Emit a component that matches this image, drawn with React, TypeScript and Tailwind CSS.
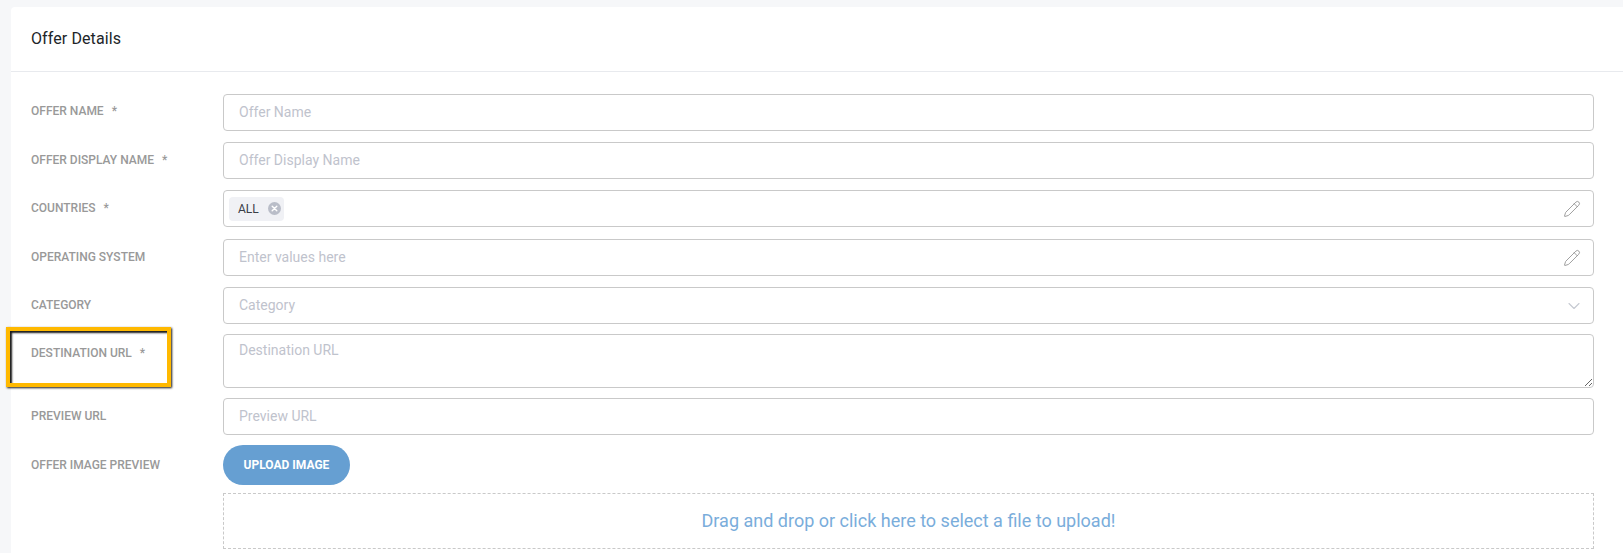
import React from 'react';
import { ChevronDown, Pencil } from 'lucide-react';

const labelClass = 'w-[192px] shrink-0 text-[12px] font-medium uppercase text-[#999999] leading-[14px]';
const boxClass = 'w-full h-[37px] rounded-[4px] border border-[#c9c9c9] bg-white pl-[15px] pr-[15px] pb-[2px] text-[14px] outline-none placeholder:text-[#bfc3cd]';

const Label: React.FC<{ text: string; required?: boolean; className?: string }> = ({ text, required, className }) => (
  <div className={`${labelClass} ${className ?? 'pt-[10px]'}`}>
    {text}
    {required && <span className="ml-[8px]">*</span>}
  </div>
);

const ClearIcon = () => (
  <svg width="13" height="13" viewBox="0 0 13 13">
    <circle cx="6.5" cy="6.5" r="6.5" fill="#b9bdc8" />
    <path d="M4.2 4.2l4.6 4.6M8.8 4.2l-4.6 4.6" stroke="#fff" strokeWidth="1.4" strokeLinecap="round" />
  </svg>
);

export default function App() {
  return (
    <div className="relative h-[553px] overflow-hidden bg-[#f6f7f9] pt-[7px] pl-[11px] font-['Roboto',sans-serif]">
      <div className="h-full bg-white rounded-tl-[4px]">
        <div className="h-[65px] border-b border-[#e8eaee] pl-[20px] pt-[22px] text-[16px] leading-[20px] tracking-[0.1px] font-normal text-[#212529]">
          Offer Details
        </div>

        <div className="pl-[20px] pr-[29px] pt-[22px]">
          <div className="flex mb-[11px]">
            <Label text="Offer Name" required className="pt-[10px]" />
            <input className={boxClass} placeholder="Offer Name" />
          </div>
          <div className="flex mb-[11px]">
            <Label text="Offer Display Name" required className="pt-[11px]" />
            <input className={boxClass} placeholder="Offer Display Name" />
          </div>
          <div className="flex mb-[12px]">
            <Label text="Countries" required className="pt-[11px]" />
            <div className="w-full h-[37px] rounded-[4px] border border-[#c9c9c9] flex items-center pl-[5px] pr-[12px]">
              <div className="h-[24px] w-[55px] rounded-[4px] bg-[#f0f1f5] flex items-center pl-[9px] gap-[9px] text-[12px] text-[#3a3f47]">
                ALL
                <ClearIcon />
              </div>
              <Pencil className="ml-auto text-[#8c8c8c]" size={18} strokeWidth={1.1} />
            </div>
          </div>
          <div className="flex mb-[11px]">
            <Label text="Operating System" className="pt-[11px]" />
            <div className="w-full h-[37px] rounded-[4px] border border-[#c9c9c9] flex items-center pl-[15px] pr-[12px] text-[14px] text-[#bfc3cd]">
              Enter values here
              <Pencil className="ml-auto text-[#8c8c8c]" size={18} strokeWidth={1.1} />
            </div>
          </div>
          <div className="flex mb-[10px]">
            <Label text="Category" className="pt-[11px]" />
            <div className="w-full h-[37px] rounded-[4px] border border-[#c9c9c9] flex items-center pl-[15px] pr-[9px] text-[14px] text-[#bfc3cd]">
              Category
              <ChevronDown className="ml-auto text-[#c6c9d2]" size={20} strokeWidth={1.3} />
            </div>
          </div>
          <div className="flex mb-[10px]">
            <Label text="Destination URL" required className="pt-[12px]" />
            <textarea
              className="block w-full h-[54px] rounded-[4px] border border-[#c9c9c9] pl-[15px] pr-[15px] pt-[5px] text-[14px] leading-[20px] outline-none resize-y placeholder:text-[#bfc3cd]"
              placeholder="Destination URL"
            />
          </div>
          <div className="flex mb-[10px]">
            <Label text="Preview URL" className="pt-[11px]" />
            <input className={boxClass} placeholder="Preview URL" />
          </div>
          <div className="flex mb-[8px]">
            <Label text="Offer Image Preview" className="pt-[13px]" />
            <div className="w-full">
              <button className="h-[40px] w-[127px] rounded-full bg-[#669fd2] text-white text-[12px] font-bold uppercase">
                Upload Image
              </button>
            </div>
          </div>
          <div className="flex">
            <div className="w-[192px] shrink-0" />
            <div className="w-full h-[56px] border border-dashed border-[#c9c9c9] flex items-center justify-center pb-[2px] text-[18px] text-[#7aaddb]">
              Drag and drop or click here to select a file to upload!
            </div>
          </div>
        </div>
      </div>

      <div className="absolute left-[6px] top-[327px] w-[165px] h-[60px] border-[4px] border-[#ffb900] shadow-[1px_1px_2px_rgba(0,0,0,0.9),inset_2px_2px_2px_rgba(0,0,0,0.9)] pointer-events-none" />
    </div>
  );
}
